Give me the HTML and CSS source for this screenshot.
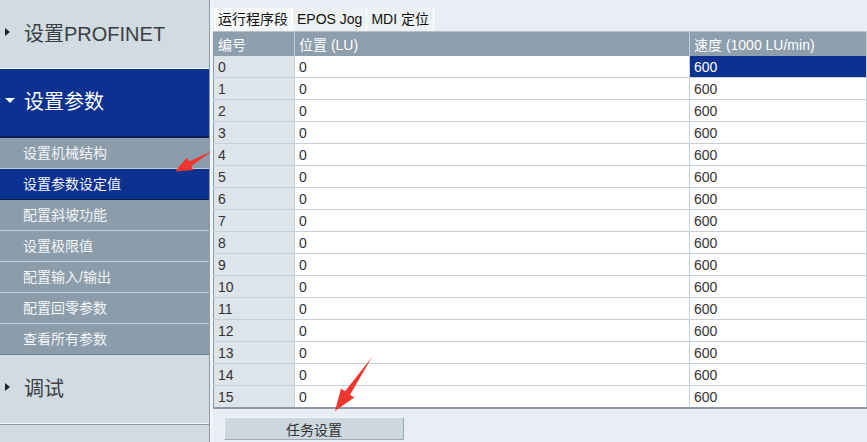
FILE: index.html
```html
<!DOCTYPE html>
<html lang="zh-CN">
<head>
    <meta charset="UTF-8">
    <title>程序段</title>
    <link rel="stylesheet" href="styles.css">
</head>
<body>
    <div class="page">
        <nav class="sidebar">
            <div class="group-head">
                <span class="tri-right"></span>设置PROFINET
            </div>
            <div class="group-head open">
                <span class="tri-down"></span>设置参数
            </div>
            <ul class="submenu">
                <li>设置机械结构</li>
                <li class="selected">设置参数设定值</li>
                <li>配置斜坡功能</li>
                <li>设置极限值</li>
                <li>配置输入/输出</li>
                <li>配置回零参数</li>
                <li>查看所有参数</li>
            </ul>
            <div class="group-head">
                <span class="tri-right"></span>调试
            </div>
            <div class="group-rest"></div>
        </nav>

        <main class="main">
            <div class="tabs">
                <div class="tab active">运行程序段</div>
                <div class="tab">EPOS Jog</div>
                <div class="tab">MDI 定位</div>
            </div>
            <table class="grid">
                <thead>
                    <tr>
                        <th class="col-no">编号</th>
                        <th class="col-pos">位置 (LU)</th>
                        <th>速度 (1000 LU/min)</th>
                    </tr>
                </thead>
                <tbody id="rows"></tbody>
            </table>
            <div class="actions">
                <button class="task-button">任务设置</button>
            </div>
        </main>
    </div>

    <svg class="marks" width="867" height="442" viewBox="0 0 867 442">
        <polygon points="212,151 191.3,165.9 193.4,169.9 175,171.5 187,157.5 189.1,161.5" fill="#f0352e"/>
        <polygon points="372,357 350.1,394.7 354.2,397.6 335,411 341,388.4 345.1,391.3" fill="#f0352e"/>
    </svg>

    <script>
        const tbody = document.getElementById('rows');
        let html = '';
        for (let i = 0; i < 16; i++) {
            html += `<tr>
                <td class="col-no">${i}</td>
                <td>0</td>
                <td class="${i === 0 ? 'cell-selected' : ''}">600</td>
            </tr>`;
        }
        tbody.innerHTML = html;
    </script>
</body>
</html>
```

FILE: styles.css
```css
body {
    margin: 0;
    font-family: "Liberation Sans", "Noto Sans CJK SC", sans-serif;
    background-color: #e9eef4;
    color: #333333;
    overflow: hidden;
}

.page {
    display: flex;
    height: 442px;
}

.sidebar {
    width: 209px;
    flex-shrink: 0;
    border-right: 1px solid #8c9ba7;
    background-color: #d1dbe2;
    display: flex;
    flex-direction: column;
}

.group-head {
    height: 69px;
    display: flex;
    align-items: center;
    font-size: 20px;
    color: #3a3f44;
    background-color: #d1dbe2;
    border-bottom: 1px solid #f3f6f8;
    box-sizing: border-box;
    padding: 0 0 4px 5px;
}

.group-head.open {
    height: 69px;
    background-color: #0b3191;
    color: #ffffff;
    border-bottom: 2px solid #0a1d4f;
}

.tri-right {
    width: 0;
    height: 0;
    border-top: 4px solid transparent;
    border-bottom: 4px solid transparent;
    border-left: 5px solid #1e2328;
    margin-right: 14px;
}

.tri-down {
    width: 0;
    height: 0;
    border-left: 5px solid transparent;
    border-right: 5px solid transparent;
    border-top: 5px solid #ffffff;
    margin-right: 9px;
}

.submenu {
    list-style: none;
    margin: 0;
    padding: 0;
    background-color: #8b9cab;
}

.submenu li {
    height: 30px;
    line-height: 30px;
    padding-left: 23px;
    font-size: 14px;
    color: #f4f6f8;
    border-bottom: 1px solid #c3ced6;
}

.submenu li.selected {
    background-color: #0b3191;
    border-bottom-color: #0a1d4f;
}

.submenu li:last-child {
    border-bottom: 1px solid #6f7f8c;
}

.group-rest {
    flex: 1;
    border-top: 1px solid #8c9ba7;
}

.main {
    flex: 1;
    padding: 8px 0 0 0;
    border-left: 3px solid #f2f5f8;
    min-width: 0;
}

.tabs {
    display: flex;
    height: 23px;
    font-size: 14px;
    padding-left: 1px;
}

.tab {
    padding: 0 4px;
    line-height: 23px;
    background-color: #eef1f4;
    border-right: 1px solid #ffffff;
    color: #111111;
}

.tab.active {
    background-color: #f6f8fa;
}

.grid {
    width: 100%;
    border-collapse: collapse;
    font-size: 14px;
    table-layout: fixed;
    border-left: 1px solid #8b9aa6;
    border-bottom: 2px solid #8b9aa6;
}

.grid th {
    height: 24px;
    background-color: #8d9eac;
    color: #ffffff;
    font-weight: normal;
    text-align: left;
    padding: 0 0 0 4px;
    border-right: 1px solid #c5d0d8;
    border-top: 1px solid #b5c2cc;
}

.grid .col-no {
    width: 76px;
}

.grid th.col-pos {
    width: 390px;
}

.grid td {
    height: 21px;
    padding: 0 0 0 4px;
    background-color: #ffffff;
    border-right: 1px solid #c5d0d8;
    border-bottom: 1px solid #c5d0d8;
    color: #333333;
}

.grid td.col-no {
    background-color: #dde4ea;
}

.grid td.cell-selected {
    background-color: #0b3191;
    color: #ffffff;
}

.actions {
    padding: 8px 0 0 11px;
}

.task-button {
    width: 180px;
    height: 23px;
    font-family: "Liberation Sans", "Noto Sans CJK SC", sans-serif;
    font-size: 14px;
    color: #333333;
    background-color: #cdd7df;
    border: 1px solid #9aa8b3;
    border-top-color: #f2f5f7;
    border-left-color: #f2f5f7;
    padding: 0;
}

.marks {
    position: absolute;
    left: 0;
    top: 0;
    pointer-events: none;
}
```
